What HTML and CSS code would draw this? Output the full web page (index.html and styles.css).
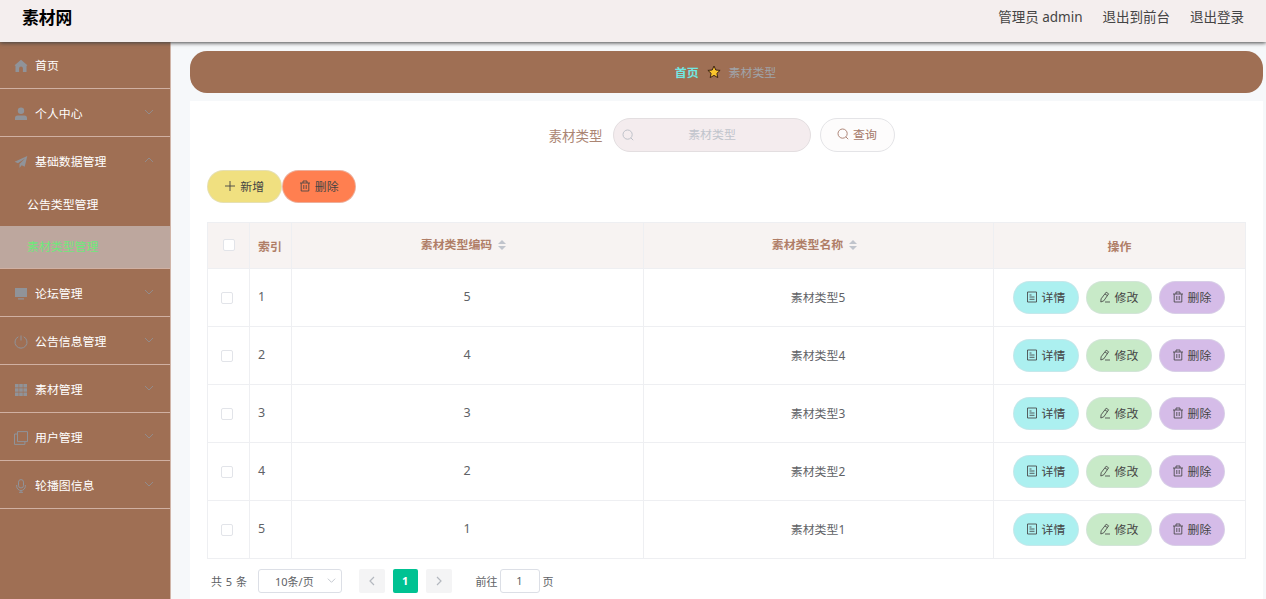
FILE: index.html
```html
<!DOCTYPE html>
<html lang="zh-CN">
<head>
    <meta charset="UTF-8">
    <meta name="viewport" content="width=device-width, initial-scale=1.0">
    <title>素材网</title>
    <link rel="stylesheet" href="styles.css">
</head>
<body>
    <!-- 图标 -->
    <svg class="sprite">
        <symbol id="i-down" viewBox="0 0 12 12"><path d="M2 4l4 4 4-4" fill="none" stroke="currentColor"/></symbol>
        <symbol id="i-left" viewBox="0 0 12 12"><path d="M8 2L4 6l4 4" fill="none" stroke="currentColor" stroke-width="1.2"/></symbol>
        <symbol id="i-right" viewBox="0 0 12 12"><path d="M4 2l4 4-4 4" fill="none" stroke="currentColor" stroke-width="1.2"/></symbol>
        <symbol id="i-search" viewBox="0 0 12 12"><circle cx="5.6" cy="5.6" r="4.6" fill="none" stroke="currentColor" stroke-width=".9"/><path d="M8.9 8.9l2.3 2.3" stroke="currentColor" stroke-width=".9"/></symbol>
        <symbol id="i-plus" viewBox="0 0 12 12"><path d="M6 1v10M1 6h10" stroke="currentColor" stroke-width=".9"/></symbol>
        <symbol id="i-trash" viewBox="0 0 12 12"><path d="M1 3h10M4 3V1h4v2M2.2 3v8h7.6V3M4.8 5v4M7.2 5v4" fill="none" stroke="currentColor" stroke-width=".85"/></symbol>
        <symbol id="i-doc" viewBox="0 0 12 12"><path d="M1.5 1h9v10h-9zM3.5 4h2M3.5 6h5M3.5 8.3h5" fill="none" stroke="currentColor" stroke-width=".85"/></symbol>
        <symbol id="i-edit" viewBox="0 0 12 12"><path d="M7.2 1.2l2.4 1.6-4.8 7-3 1.2.3-3.2zM6 3l2.4 1.6M6 11h5" fill="none" stroke="currentColor" stroke-width=".85"/></symbol>
    </svg>

    <header class="navbar">
        <h1 class="title">素材网</h1>
        <nav class="right-menu">
            <span>管理员 admin</span>
            <a>退出到前台</a>
            <a>退出登录</a>
        </nav>
    </header>

    <div class="layout">
        <aside class="sidebar">
            <ul class="menu">
                <li><div class="menu-title"><svg class="m-icon" viewBox="0 0 14 14"><path d="M7 .8L.6 6.2 1.500 7V13h3.600V9.500a1.900 1.900 0 0 1 3.800 0V13h3.600V7l.9-.8z" fill="currentColor"/></svg><span>首页</span></div></li>
                <li><div class="menu-title"><svg class="m-icon" viewBox="0 0 14 14"><circle cx="7" cy="3.8" r="3.2" fill="currentColor"/><path d="M1 13v-2q0-2.6 2.6-2.6h6.8Q13 8.400 13 11v2z" fill="currentColor"/></svg><span>个人中心</span><svg class="arrow"><use href="#i-down"/></svg></div></li>
                <li>
                    <div class="menu-title"><svg class="m-icon" viewBox="0 0 14 14"><path d="M13.300 1L.6 6.700l3.300 1.600L11 3.500 5.500 9v4l2.200-2.700 3 1.500z" fill="currentColor"/></svg><span>基础数据管理</span><svg class="arrow open"><use href="#i-down"/></svg></div>
                    <ul class="submenu">
                        <li>公告类型管理</li>
                        <li class="active">素材类型管理</li>
                    </ul>
                </li>
                <li><div class="menu-title"><svg class="m-icon" viewBox="0 0 14 14"><path d="M1 1h12v9H1zM4 11.200h6v1.200H4z" fill="currentColor"/></svg><span>论坛管理</span><svg class="arrow"><use href="#i-down"/></svg></div></li>
                <li><div class="menu-title"><svg class="m-icon" viewBox="0 0 14 14"><path d="M4.300 1.800a6 6 0 1 0 5.400 0M7 .5v5" fill="none" stroke="currentColor"/></svg><span>公告信息管理</span><svg class="arrow"><use href="#i-down"/></svg></div></li>
                <li><div class="menu-title"><svg class="m-icon" viewBox="0 0 14 14"><path d="M1 1h3.600v3.600H1zM5.200 1h3.600v3.600H5.200zM9.400 1H13v3.600H9.400zM1 5.200h3.600v3.600H1zM5.200 5.200h3.600v3.600H5.200zM9.400 5.200H13v3.600H9.400zM1 9.400h3.600V13H1zM5.200 9.400h3.600V13H5.200zM9.400 9.400H13V13H9.400z" fill="currentColor"/></svg><span>素材管理</span><svg class="arrow"><use href="#i-down"/></svg></div></li>
                <li><div class="menu-title"><svg class="m-icon" viewBox="0 0 14 14"><path d="M3.500.6h10v10h-10zM3.500 3h-3v10.400h10.400v-2.800" fill="none" stroke="currentColor"/></svg><span>用户管理</span><svg class="arrow"><use href="#i-down"/></svg></div></li>
                <li><div class="menu-title"><svg class="m-icon" viewBox="0 0 14 14"><rect x="4.500" y=".6" width="5" height="8.400" rx="2.500" fill="none" stroke="currentColor"/><path d="M2.700 6v1.200a4.300 4.300 0 0 0 8.600 0V6M7 11.500v2M5 13.300h4" fill="none" stroke="currentColor"/></svg><span>轮播图信息</span><svg class="arrow"><use href="#i-down"/></svg></div></li>
            </ul>
        </aside>

        <main class="main">
            <div class="breadcrumb">
                <b>首页</b>
                <svg class="star" viewBox="0 0 14 14"><path d="M7 1l1.800 4 4.300.4-3.200 2.900.9 4.300L7 10.400l-3.800 2.200.9-4.300L.9 5.400 5.200 5z" fill="#fbc52c" stroke="#3d2414" stroke-linejoin="round"/></svg>
                <span>素材类型</span>
            </div>

            <section class="content">
                <form class="search">
                    <label for="keyword">素材类型</label>
                    <div class="search-input">
                        <svg class="icon"><use href="#i-search"/></svg>
                        <input type="text" id="keyword" placeholder="素材类型">
                    </div>
                    <button type="button" class="btn btn-search"><svg class="icon"><use href="#i-search"/></svg>查询</button>
                </form>

                <div class="toolbar">
                    <button class="btn btn-add"><svg class="icon"><use href="#i-plus"/></svg>新增</button>
                    <button class="btn btn-del"><svg class="icon"><use href="#i-trash"/></svg>删除</button>
                </div>

                <table class="table">
                    <colgroup>
                        <col class="c-check"><col class="c-index"><col class="c-code"><col class="c-name"><col class="c-action">
                    </colgroup>
                    <thead>
                        <tr>
                            <th class="left"><i class="checkbox"></i></th>
                            <th class="left">索引</th>
                            <th class="sortable">素材类型编码<svg class="sort" viewBox="0 0 8 12"><path d="M0 5l4-4 4 4zM0 7l4 4 4-4z" fill="currentColor"/></svg></th>
                            <th class="sortable">素材类型名称<svg class="sort" viewBox="0 0 8 12"><path d="M0 5l4-4 4 4zM0 7l4 4 4-4z" fill="currentColor"/></svg></th>
                            <th>操作</th>
                        </tr>
                    </thead>
                    <tbody id="rows"></tbody>
                </table>

                <div class="pagination">
                    <span class="total">共 5 条</span>
                    <div class="size">10条/页<svg class="arrow"><use href="#i-down"/></svg></div>
                    <button class="page"><svg><use href="#i-left"/></svg></button>
                    <button class="page current">1</button>
                    <button class="page"><svg><use href="#i-right"/></svg></button>
                    <span class="jump">前往<input type="text" value="1">页</span>
                </div>
            </section>
        </main>
    </div>

    <script>
        const list = [5, 4, 3, 2, 1];

        // 渲染表格
        document.getElementById('rows').innerHTML = list.map((code, i) => `
            <tr>
                <td class="left"><i class="checkbox"></i></td>
                <td class="left num">${i + 1}</td>
                <td class="num">${code}</td>
                <td>素材类型${code}</td>
                <td>
                    <div class="actions">
                        <button class="btn btn-info"><svg class="icon"><use href="#i-doc"/></svg>详情</button>
                        <button class="btn btn-edit"><svg class="icon"><use href="#i-edit"/></svg>修改</button>
                        <button class="btn btn-remove"><svg class="icon"><use href="#i-trash"/></svg>删除</button>
                    </div>
                </td>
            </tr>`).join('');
    </script>
</body>
</html>
```
FILE: styles.css
```css
* {
    margin: 0;
    padding: 0;
    box-sizing: border-box;
}

body {
    height: 100vh;
    overflow: hidden;
    display: flex;
    flex-direction: column;
    font-family: "Noto Sans", "Noto Sans CJK SC", sans-serif;
    font-size: 11.9px;
    color: #606266;
    background: #f6f8fa;
}

ul {
    list-style: none;
}

input, button {
    font-family: inherit;
    font-size: inherit;
    color: inherit;
    outline: none;
}

.sprite {
    display: none;
}

.navbar {
    position: relative;
    z-index: 2;
    flex: none;
    height: 42px;
    padding: 0 22px;
    display: flex;
    justify-content: space-between;
    background: #f4eeee;
    box-shadow: 0 1px 4px #444;
}

.title {
    font-size: 16.8px;
    line-height: 35px;
    color: #000;
}

.right-menu {
    display: flex;
    gap: 20px;
    font-size: 13.5px;
    line-height: 35px;
    color: #444;
}

.layout {
    flex: 1;
    display: flex;
    min-height: 0;
}

/* 侧边栏 */
.sidebar {
    width: 171px;
    flex: none;
    margin-top: -1px;
    background: #9f6f54;
    border-right: 1px solid #d0b5a8;
    color: #fff;
}

.menu > li {
    border-bottom: 1px solid #d0b0a2;
}

.menu-title {
    height: 47px;
    padding: 3px 15px 0 14px;
    display: flex;
    align-items: center;
}

.menu-title span {
    padding-bottom: 3px;
}

.m-icon {
    width: 14px;
    height: 14px;
    margin-right: 7px;
    color: #909399;
}

.menu-title .arrow {
    width: 12px;
    height: 12px;
    margin: 0 0 4px auto;
    color: #909399;
    opacity: .8;
}

.menu-title .arrow.open {
    transform: rotate(180deg);
}

.submenu li {
    height: 42px;
    line-height: 41px;
    padding-left: 27px;
}

.submenu li.active {
    background: #bda79e;
    color: #6fe87b;
}

/* 主体 */
.main {
    flex: 1;
    display: flex;
    flex-direction: column;
    padding: 9px 4px 0 19px;
}

.breadcrumb {
    flex: none;
    height: 42px;
    margin-bottom: 8px;
    padding: 0 2px 2px 0;
    display: flex;
    align-items: center;
    justify-content: center;
    border-radius: 17px;
    background: #9f6f54;
    color: #a0a4aa;
}

.breadcrumb b {
    color: #70e8e3;
}

.star {
    width: 14px;
    height: 14px;
    margin: 2px 8px 0;
}

.content {
    flex: 1;
    padding: 17px 17px 0;
    background: #fff;
}

.search {
    height: 34px;
    display: flex;
    align-items: center;
    justify-content: center;
    padding-right: 10px;
}

.search label {
    margin-right: 10px;
    font-size: 13.5px;
    color: #ab8573;
}

.search-input {
    width: 198px;
    height: 34px;
    padding: 0 19px 0 8px;
    margin-right: 9px;
    display: flex;
    align-items: center;
    border: 1px solid #e3dee0;
    border-radius: 17px;
    background: #f4ecee;
    color: #b8bcc4;
}

.search-input .icon {
    margin: 0;
}

.search-input input {
    flex: 1;
    min-width: 0;
    padding-bottom: 2px;
    border: none;
    background: none;
    text-align: center;
}

.search-input input::placeholder {
    color: #c0c4cc;
}

.icon {
    width: 12px;
    height: 12px;
    margin: 1px 4px 0 0;
}

.btn {
    width: 66px;
    height: 33px;
    padding-bottom: 2px;
    display: flex;
    align-items: center;
    justify-content: center;
    border: 1px solid rgba(220, 223, 230, .5);
    border-radius: 17px;
    color: #444;
}

.btn-search {
    width: 75px;
    height: 34px;
    padding-bottom: 4px;
    background: #fdfcfc;
    border-color: #e4e4e7;
    color: #a5796a;
}

.toolbar {
    display: flex;
    margin: 18px 0 19px;
}

.toolbar .btn {
    width: 74.5px;
}

.btn-add {
    background: #f0e080;
}

.btn-del {
    background: #ff7f50;
}

.btn-info {
    background: #acf0f0;
}

.btn-edit {
    background: #c8eac8;
}

.btn-remove {
    background: #d5bce8;
}

/* 表格 */
.table {
    width: 1039px;
    table-layout: fixed;
    border-collapse: collapse;
    text-align: center;
}

.c-check, .c-index {
    width: 42px;
}

.c-code {
    width: 352px;
}

.c-name {
    width: 350px;
}

.c-action {
    width: 252px;
}

.table th, .table td {
    border: 1px solid #eeeff2;
}

.table th {
    height: 46px;
    padding-bottom: 1px;
    background: #f7f3f2;
    color: #b07e67;
}

.table th.sortable {
    padding: 0 8px 4px 0;
}

.table td {
    height: 58px;
    padding: 0 1px 2px 0;
}

.table td:last-child {
    padding: 0 2px 0 0;
}

.table .num {
    font-size: 12.5px;
}

.table .left {
    text-align: left;
    padding-left: 8px;
}

.checkbox {
    display: block;
    width: 12px;
    height: 12px;
    margin: 2px 0 0 5px;
    border: 1px solid #e2e4e9;
    border-radius: 2px;
    background: #fff;
}

th .checkbox {
    margin: 0 0 0 7px;
}

.sort {
    width: 8px;
    height: 12px;
    margin-left: 6px;
    vertical-align: -2px;
    color: #c0c4cc;
}

.actions {
    display: flex;
    justify-content: center;
    gap: 7px;
}

/* 分页 */
.pagination {
    display: flex;
    align-items: center;
    margin-top: 10px;
    padding-left: 4px;
    font-size: 11px;
}

.total {
    width: 47px;
    padding-bottom: 1px;
    word-spacing: 1px;
}

.size {
    width: 84px;
    height: 24px;
    margin-right: 17px;
    padding: 0 4px 1px 16px;
    display: flex;
    align-items: center;
    justify-content: space-between;
    border: 1px solid #dcdfe6;
    border-radius: 3px;
}

.size .arrow {
    width: 11px;
    height: 11px;
    color: #c0c4cc;
}

.page {
    width: 25.5px;
    height: 24px;
    margin-right: 8px;
    padding-bottom: 1px;
    display: flex;
    align-items: center;
    justify-content: center;
    border: none;
    border-radius: 2px;
    background: #f4f4f5;
    color: #b4b8bf;
}

.page svg {
    width: 12px;
    height: 12px;
}

.page.current {
    background: #00c292;
    color: #fff;
    font-weight: bold;
}

.jump {
    display: flex;
    align-items: center;
    margin-left: 16px;
}

.jump input {
    width: 40px;
    height: 24px;
    margin: 0 3px 0 2px;
    padding-bottom: 1px;
    border: 1px solid #dcdfe6;
    border-radius: 3px;
    text-align: center;
}
```
